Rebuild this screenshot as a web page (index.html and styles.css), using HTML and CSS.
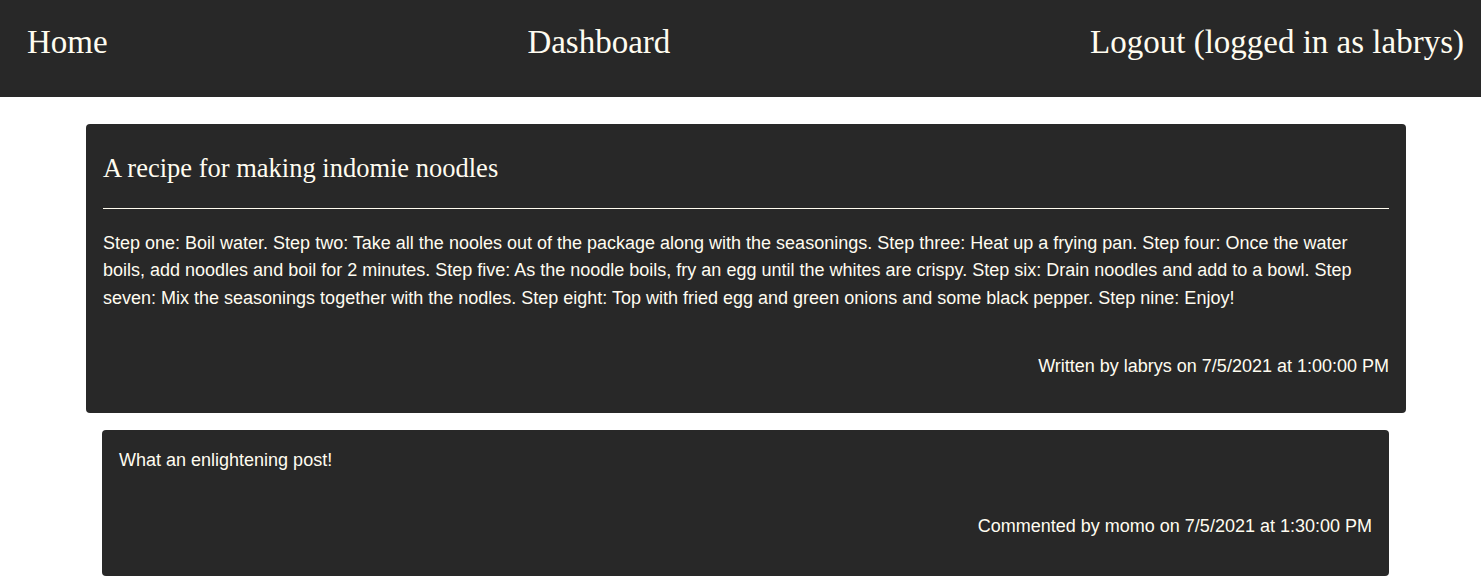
FILE: index.html
```html
<!DOCTYPE html>
<html>
<head>
<meta charset="utf-8">
<link rel="stylesheet" href="styles.css">
</head>
<body>
<header class="topbar">
  <a class="nav-link" href="#">Home</a>
  <a class="nav-link" href="#">Dashboard</a>
  <a class="nav-link" href="#">Logout (logged in as labrys)</a>
</header>
<main class="content">
  <article class="post">
    <h2 class="post-title">A recipe for making indomie noodles</h2>
    <hr class="post-rule">
    <p class="post-body">Step one: Boil water. Step two: Take all the nooles out of the package along with the seasonings. Step three: Heat up a frying pan. Step four: Once the water boils, add noodles and boil for 2 minutes. Step five: As the noodle boils, fry an egg until the whites are crispy. Step six: Drain noodles and add to a bowl. Step seven: Mix the seasonings together with the nodles. Step eight: Top with fried egg and green onions and some black pepper. Step nine: Enjoy!</p>
    <p class="post-meta">Written by labrys on 7/5/2021 at 1:00:00 PM</p>
  </article>
  <section class="comment">
    <p class="comment-body">What an enlightening post!</p>
    <p class="comment-meta">Commented by momo on 7/5/2021 at 1:30:00 PM</p>
  </section>
</main>
</body>
</html>
```

FILE: styles.css
```css
html, body {
  margin: 0;
  padding: 0;
  background: #ffffff;
}

body {
  font-family: "Liberation Sans", Arial, sans-serif;
  color: #fffcf0;
}

.topbar {
  display: flex;
  justify-content: space-between;
  align-items: center;
  height: 97px;
  padding: 0 17px 0 27px;
  background: #282828;
  box-sizing: border-box;
}

.nav-link {
  font-family: "Liberation Serif", "Times New Roman", serif;
  font-size: 33px;
  color: #fffcf0;
  text-decoration: none;
  line-height: 1;
  padding-bottom: 12px;
}

.content {
  display: flex;
  flex-direction: column;
  align-items: flex-start;
  padding: 27px 0 0 86px;
}

.post {
  width: 1320px;
  box-sizing: border-box;
  background: #282828;
  border-radius: 4px;
  padding: 16px 17px 36px;
}

.post-title {
  font-family: "Liberation Serif", "Times New Roman", serif;
  font-weight: normal;
  font-size: 26.5px;
  line-height: 1.2;
  margin: 13px 0 0;
}

.post-rule {
  border: 0;
  border-top: 1px solid #fffcf0;
  margin: 23px 0 0;
  height: 0;
}

.post-body {
  font-size: 18px;
  line-height: 27.5px;
  margin: 21px 0 0;
}

.post-meta {
  font-size: 18px;
  line-height: 21px;
  text-align: right;
  margin: 44px 0 0;
}

.comment {
  width: 1287px;
  box-sizing: border-box;
  margin: 17px 0 0 16px;
  background: #282828;
  border-radius: 4px;
  padding: 20px 17px 39px;
}

.comment-body {
  font-size: 18px;
  line-height: 21px;
  margin: 0;
}

.comment-meta {
  font-size: 18px;
  line-height: 21px;
  text-align: right;
  margin: 45px 0 0;
}
```
